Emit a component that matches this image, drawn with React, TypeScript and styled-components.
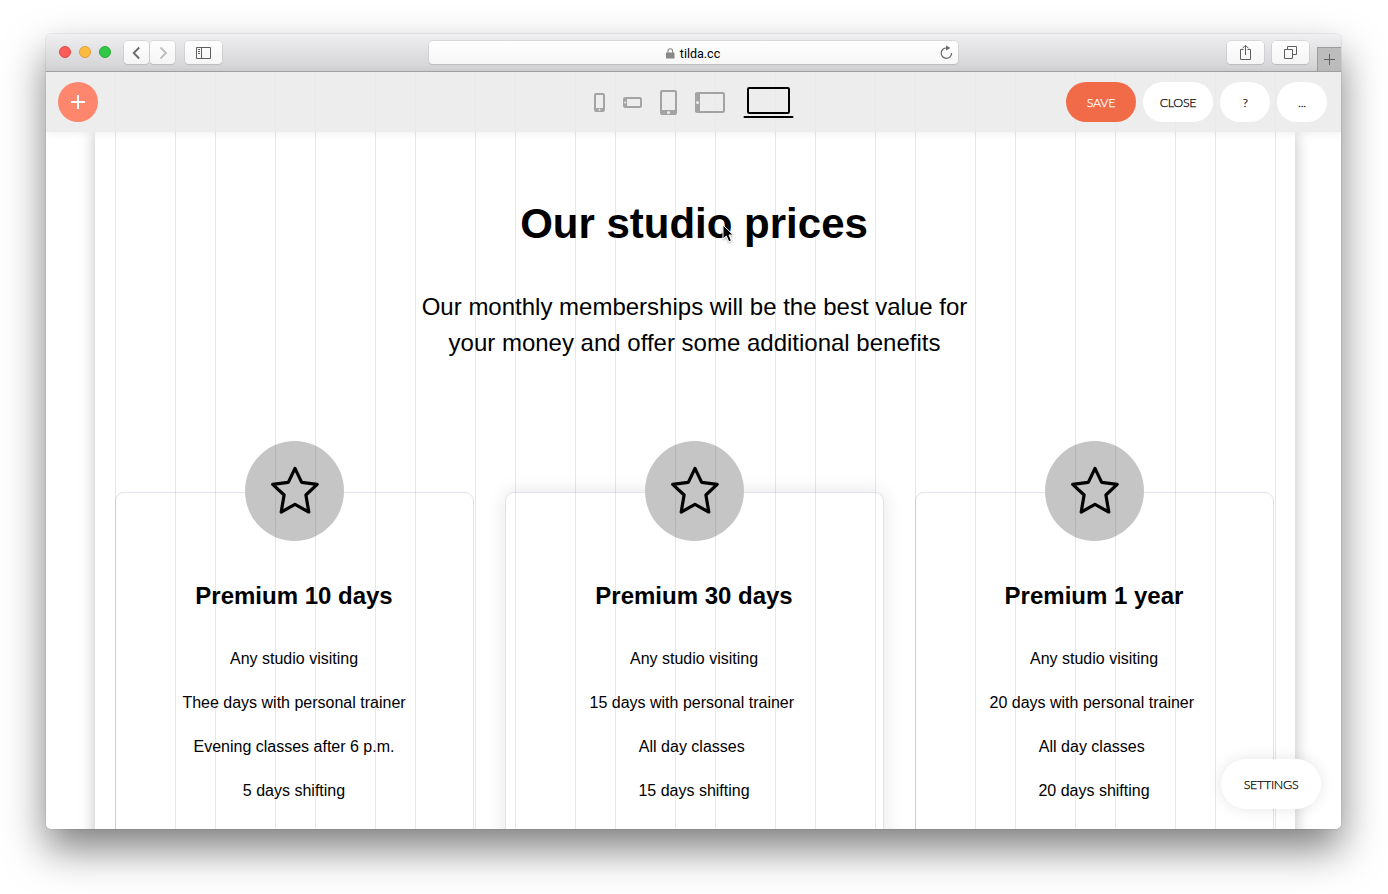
import React from "react";
import styled, { createGlobalStyle, css } from "styled-components";

const GlobalStyle = createGlobalStyle`
  * { box-sizing: border-box; }
  body { margin: 0; background: #fff; overflow: hidden; }
`;

const sans = `"Liberation Sans", Arial, sans-serif`;
const geometric = `Lato, "Liberation Sans", sans-serif`;

const gridLines = (color: string) => css`
  background-image: repeating-linear-gradient(
    to right,
    ${color} 0,
    ${color} 1px,
    transparent 1px,
    transparent 60px,
    ${color} 60px,
    ${color} 61px,
    transparent 61px,
    transparent 100px
  );
`;

const Desktop = styled.div`
  width: 1388px;
  height: 894px;
  padding: 34px 47px 65px 46px;
  overflow: hidden;
  font-family: ${sans};
  color: #000;
`;

const Window = styled.div`
  position: relative;
  width: 1295px;
  height: 795px;
  border-radius: 5px;
  box-shadow: 0 0 1px rgba(0, 0, 0, 0.55), 0 20px 40px rgba(0, 0, 0, 0.5);
`;

const WindowBody = styled.div`
  display: flex;
  flex-direction: column;
  height: 100%;
  border-radius: 5px;
  overflow: hidden;
  background: #fff;
`;

const TitleBar = styled.header`
  display: flex;
  flex: none;
  align-items: center;
  height: 38px;
  padding-left: 13px;
  background: linear-gradient(#f0eff1, #e6e5e8 30%, #d2d2d4);
  border-bottom: 1px solid #a3a3a3;
`;

const Lights = styled.div`
  display: flex;
  gap: 8px;
  margin: -1px 12px 0 0;
`;

const Light = styled.span<{ $fill: string; $edge: string }>`
  width: 12px;
  height: 12px;
  border-radius: 50%;
  background: ${(p) => p.$fill};
  border: 1px solid ${(p) => p.$edge};
`;

const ChromeButton = styled.button<{ $width: number; $ml?: number }>`
  display: flex;
  align-items: center;
  justify-content: center;
  width: ${(p) => p.$width}px;
  height: 23px;
  margin: 0 0 0 ${(p) => p.$ml || 0}px;
  padding: 0;
  border: 0;
  border-radius: 4px;
  background: linear-gradient(#fefefe, #f5f5f5);
  box-shadow: 0 0 0 0.5px #c6c6c8, 0 1px 1px #b5b5b8;
`;

const AddressBar = styled.div`
  position: relative;
  display: flex;
  align-items: center;
  justify-content: center;
  gap: 5px;
  width: 529px;
  height: 23px;
  margin-left: 207px;
  padding: 1px 1px 0 0;
  border-radius: 4px;
  background: linear-gradient(#fefefe, #f7f7f7);
  box-shadow: 0 0 0 0.5px #c6c6c8, 0 1px 1px #b5b5b8;
  font: 12.5px Roboto, ${sans};
`;

const Reload = styled.svg`
  position: absolute;
  right: 5px;
  top: 4px;
`;

const NewTab = styled.div`
  display: flex;
  align-items: center;
  justify-content: center;
  align-self: flex-end;
  width: 24px;
  height: 24px;
  margin-left: auto;
  border: solid #9c9c9c;
  border-width: 1px 0 0 1px;
  background: #bcbcbc;
`;

const Toolbar = styled.nav`
  position: relative;
  z-index: 2;
  display: flex;
  flex: none;
  align-items: center;
  height: 60px;
  padding: 0 14px 0 12px;
  ${gridLines("#e9e9ec")}
  background-position: 69px 0;
  background-size: 1161px 100%;
  background-repeat: no-repeat;
  background-color: #ededed;
  box-shadow: 0 1px 8px rgba(0, 0, 0, 0.07);
`;

const AddButton = styled.button`
  display: flex;
  align-items: center;
  justify-content: center;
  width: 40px;
  height: 40px;
  padding: 0;
  border: 0;
  border-radius: 50%;
  background: #fe866c;
`;

const Devices = styled.div`
  display: flex;
  align-items: center;
  gap: 18px;
  margin-left: 496px;
  height: 40px;
  padding-top: 1px;
`;

const Actions = styled.div`
  display: flex;
  gap: 7px;
  margin-left: auto;
`;

const Pill = styled.button<{ $width: number; $primary?: boolean }>`
  width: ${(p) => p.$width}px;
  height: 40px;
  padding: 1px 0 0;
  border: 0;
  border-radius: 20px;
  background: ${(p) => (p.$primary ? "#f26b49" : "#fff")};
  color: ${(p) => (p.$primary ? "#fff" : "#000")};
  font: 300 12.5px ${geometric};
  letter-spacing: -0.3px;
  -webkit-text-stroke: 0.25px currentColor;
`;

const Settings = styled(Pill)`
  position: absolute;
  z-index: 3;
  right: 20px;
  bottom: 20px;
  height: 50px;
  border-radius: 25px;
  box-shadow: 0 0 15px rgba(0, 0, 0, 0.1);
`;

const Page = styled.main`
  position: relative;
  flex: 1;
  width: 1200px;
  margin-left: 49px;
  padding: 0 20px;
  background: #fff;
  box-shadow: 0 0 15px rgba(0, 0, 0, 0.25);
  text-align: center;

  &::after {
    content: "";
    position: absolute;
    inset: 0 19px 0 20px;
    ${gridLines("rgba(50, 50, 150, 0.12)")}
    pointer-events: none;
  }
`;

const Title = styled.h1`
  margin: 66px 2px 0 0;
  font-size: 42px;
  line-height: 52px;
`;

const Lead = styled.p`
  margin: 39px 1px 0 0;
  font-size: 24px;
  line-height: 36px;
`;

const Cards = styled.div`
  display: flex;
  align-items: flex-start;
  gap: 31px;
  margin-top: 131px;
`;

const Card = styled.article<{ $featured?: boolean }>`
  width: ${(p) => (p.$featured ? 379 : 359)}px;
  height: 360px;
  flex: none;
  border: 1px solid #e0e3ea;
  border-radius: 9px;
  background: #fff;
  box-shadow: ${(p) => (p.$featured ? "0 0 20px rgba(0, 0, 0, 0.11)" : "none")};
`;

const Badge = styled.div`
  display: flex;
  align-items: center;
  justify-content: center;
  width: 99px;
  height: 100px;
  margin: -52px auto 0;
  border-radius: 50%;
  background: #c5c5c5;
`;

const Plan = styled.h2`
  margin: 40px 1px 0 0;
  font-size: 24px;
  line-height: 30px;
`;

const Perks = styled.ul`
  list-style: none;
  margin: 26px 1px 0 0;
  padding: 0;
  font-size: 16px;
  line-height: 44px;
`;

const Pointer = styled.svg`
  position: absolute;
  z-index: 4;
  left: 675px;
  top: 189px;
  filter: drop-shadow(0 1px 1px rgba(0, 0, 0, 0.3));
`;

const plans = [
  {
    name: "Premium 10 days",
    perks: ["Any studio visiting", "Thee days with personal trainer", "Evening classes after 6 p.m.", "5 days shifting"],
  },
  {
    name: "Premium 30 days",
    perks: ["Any studio visiting", "15 days with personal trainer\u00a0", "All day classes\u00a0", "15 days shifting"],
    featured: true,
  },
  {
    name: "Premium 1 year",
    perks: ["Any studio visiting", "20 days with personal trainer\u00a0", "All day classes\u00a0", "20 days shifting"],
  },
];

const Chevron = ({ d, color }: { d: string; color: string }) => (
  <svg width="10" height="14" fill="none" stroke={color} strokeWidth="1.8">
    <path d={d} />
  </svg>
);

const Star = () => (
  <svg width="50" height="50" viewBox="0 0 50 50" fill="none" stroke="#000" strokeWidth="3.2" strokeLinejoin="round">
    <path d="M25 2.4 L31.7 16.4 L47.2 18.3 L35.9 29 L38.8 46 L25 38.4 L11.2 46 L14.1 29 L2.7 18.3 L18.3 16.4 Z" />
  </svg>
);

export default function App() {
  return (
    <>
      <GlobalStyle />
      <Desktop>
        <Window>
          <WindowBody>
            <TitleBar>
              <Lights>
                <Light $fill="#fc5b57" $edge="#df4744" />
                <Light $fill="#fdbc40" $edge="#dea035" />
                <Light $fill="#34c84a" $edge="#27aa35" />
              </Lights>
              <ChromeButton $width={25} $ml={1}>
                <Chevron d="M7.2 1.5 L1.7 7 L7.2 12.5" color="#686868" />
              </ChromeButton>
              <ChromeButton $width={25} $ml={1}>
                <Chevron d="M2.5 1.5 L8 7 L2.5 12.5" color="#bdbdbd" />
              </ChromeButton>
              <ChromeButton $width={37} $ml={10}>
                <svg width="15" height="12" fill="none" stroke="#5e5e5e">
                  <path d="M.5 .5H14.5V11.5H.5ZM5.5 .5V11.5M2 2.5H4M2 4.5H4M2 6.5H4" />
                </svg>
              </ChromeButton>
              <AddressBar>
                <svg width="9" height="11">
                  <path d="M2 5V3a2.3 2.3 0 0 1 4.6 0V5" fill="none" stroke="#888" strokeWidth="1.1" />
                  <rect y="4.5" width="8.5" height="6" rx=".6" fill="#888" />
                </svg>
                tilda.cc
                <Reload width="14" height="15" fill="none" stroke="#686868" strokeWidth="1.2">
                  <path d="M7.8 3A5.2 5.2 0 1 0 12.6 8" />
                  <path d="M7 .4L11.4 3L7 5.6Z" fill="#686868" stroke="none" />
                </Reload>
              </AddressBar>
              <ChromeButton $width={37} $ml={269}>
                <svg width="11" height="17" fill="none" stroke="#5e5e5e">
                  <path d="M3.5 5.5H.5V15.5H10.5V5.5H7.5M5.5 11V1.5M2.5 4.3L5.5 1.3L8.5 4.3" />
                </svg>
              </ChromeButton>
              <ChromeButton $width={37} $ml={8}>
                <svg width="13" height="13" fill="none" stroke="#5e5e5e">
                  <path d="M.5 3.5H8.5V12.5H.5ZM3.5 3.5V.5H12.5V8.5H8.5" />
                </svg>
              </ChromeButton>
              <NewTab>
                <svg width="11" height="11" stroke="#606060">
                  <path d="M5.5 0V11M0 5.5H11" />
                </svg>
              </NewTab>
            </TitleBar>

            <Toolbar>
              <AddButton aria-label="Add">
                <svg width="14" height="14" stroke="#fff" strokeWidth="2">
                  <path d="M7 0V14M0 7H14" />
                </svg>
              </AddButton>
              <Devices>
                <svg width="11" height="19" fill="none" stroke="#a3a3a3" strokeWidth="2">
                  <rect x="1" y="1" width="9" height="17" rx="1.2" />
                  <path d="M1 16.5H10" strokeWidth="3" />
                  <circle cx="5.5" cy="16.8" r="1" fill="#ededed" stroke="none" />
                </svg>
                <svg width="19" height="11" fill="none" stroke="#a3a3a3" strokeWidth="2">
                  <rect x="1" y="1" width="17" height="9" rx="1.2" />
                  <path d="M2.5 1V10" strokeWidth="3" />
                  <circle cx="2.2" cy="5.5" r="1" fill="#ededed" stroke="none" />
                </svg>
                <svg width="17" height="25" fill="none" stroke="#a3a3a3" strokeWidth="2">
                  <rect x="1" y="1" width="15" height="23" rx="1.2" />
                  <path d="M1 22.5H16" strokeWidth="5" />
                  <circle cx="8.5" cy="22.5" r="1.5" fill="#ededed" stroke="none" />
                </svg>
                <svg width="30" height="21" fill="none" stroke="#a3a3a3" strokeWidth="2">
                  <rect x="1" y="1" width="28" height="19" rx="1.2" />
                  <path d="M2.5 1V20" strokeWidth="5" />
                  <circle cx="2.5" cy="10.5" r="1.5" fill="#ededed" stroke="none" />
                </svg>
                <svg width="52" height="32" fill="none" stroke="#000" strokeWidth="2">
                  <rect x="5" y="1" width="41" height="25" rx="1.2" />
                  <path d="M1.5 30H49.5" strokeLinecap="round" />
                </svg>
              </Devices>
              <Actions>
                <Pill $width={70} $primary>SAVE</Pill>
                <Pill $width={70}>CLOSE</Pill>
                <Pill $width={50}>?</Pill>
                <Pill $width={50}>...</Pill>
              </Actions>
            </Toolbar>

            <Page>
              <Title>Our studio prices</Title>
              <Lead>
                Our monthly memberships will be the best value for
                <br />
                your money and offer some additional benefits
              </Lead>
              <Cards>
                {plans.map((plan) => (
                  <Card key={plan.name} $featured={plan.featured}>
                    <Badge>
                      <Star />
                    </Badge>
                    <Plan>{plan.name}</Plan>
                    <Perks>
                      {plan.perks.map((perk) => (
                        <li key={perk}>{perk}</li>
                      ))}
                    </Perks>
                  </Card>
                ))}
              </Cards>
            </Page>
          </WindowBody>
          <Settings $width={100}>SETTINGS</Settings>
          <Pointer width="14" height="22">
            <path d="M2 2V16L5.3 13L7.8 18.8L10.4 17.6L8 12H12.3Z" fill="#000" stroke="#fff" />
          </Pointer>
        </Window>
      </Desktop>
    </>
  );
}
